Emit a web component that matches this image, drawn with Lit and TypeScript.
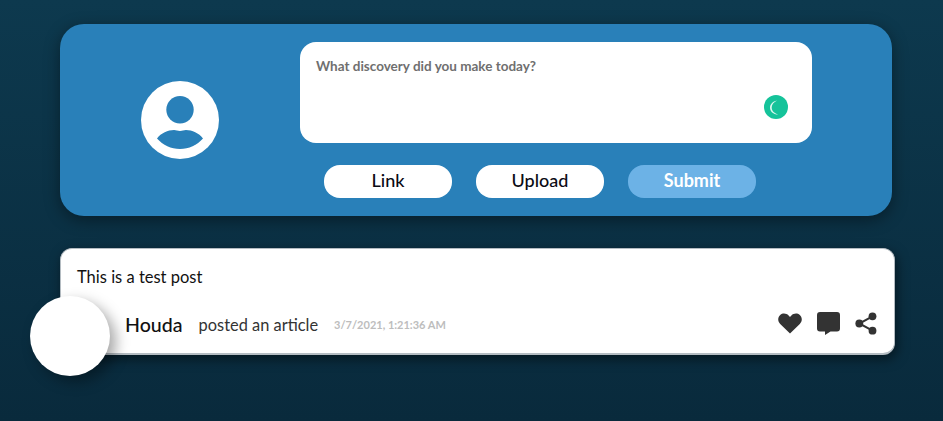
import { LitElement, html, css } from "lit";
import { customElement } from "lit/decorators.js";

@customElement("app-root")
export class AppRoot extends LitElement {
  static styles = css`
    :host {
      display: block;
      height: 421px;
      overflow: hidden;
      box-sizing: border-box;
      padding: 24px 49px 0 60px;
      background: linear-gradient(180deg, #0d394e 0%, #092a3c 100%);
      font-family: "Lato", "Open Sans", sans-serif;
    }
    .composer {
      width: 832px;
      height: 192px;
      box-sizing: border-box;
      padding: 18px 80px 18px 81px;
      border-radius: 24px;
      background: #2980b9;
      box-shadow: 0 4px 16px rgba(0, 0, 0, 0.4);
      display: flex;
      align-items: center;
    }
    .me {
      width: 78px;
      height: 78px;
      margin-right: 81px;
      flex: none;
      display: block;
    }
    .right {
      flex: 1;
      display: flex;
      flex-direction: column;
      gap: 22px;
    }
    .input {
      position: relative;
      height: 101px;
      box-sizing: border-box;
      padding: 16px;
      border-radius: 16px;
      background: #fff;
      color: #6f6f6f;
      font-size: 13.5px;
      font-weight: 700;
      line-height: 17px;
    }
    .grammarly {
      position: absolute;
      right: 24px;
      bottom: 24px;
      width: 24px;
      height: 24px;
    }
    .buttons {
      display: flex;
      justify-content: center;
      gap: 24px;
      padding-right: 32px;
    }
    .btn {
      width: 128px;
      height: 33px;
      box-sizing: border-box;
      padding-bottom: 3px;
      border-radius: 16px;
      background: #fff;
      color: #0b0b14;
      font-size: 18px;
      font-weight: 500;
      display: flex;
      align-items: center;
      justify-content: center;
    }
    .btn.primary {
      background: #6cb2e6;
      color: #fff;
      font-weight: 700;
    }
    .post {
      position: relative;
      width: 835px;
      height: 107px;
      box-sizing: border-box;
      margin-top: 32px;
      padding: 18px 16px 0 16px;
      border-radius: 12px;
      background: #fff;
      border-style: solid;
      border-color: #b4bcc2;
      border-width: 1px 1px 2px 1px;
      box-shadow: 2px 4px 12px rgba(0, 0, 0, 0.5);
      display: flex;
      flex-direction: column;
      gap: 25px;
    }
    .body {
      font-size: 16.5px;
      line-height: 20px;
      color: #111;
    }
    .meta {
      display: flex;
      align-items: center;
      padding-left: 48px;
      height: 24px;
      color: #333;
    }
    .avatar {
      position: absolute;
      left: -31px;
      top: 47px;
      width: 80px;
      height: 80px;
      border-radius: 50%;
      background: #fff;
      box-shadow: 6px 6px 14px rgba(0, 0, 0, 0.35);
    }
    .name {
      font-size: 19.6px;
      font-weight: 500;
      color: #111;
      margin-right: 16px;
    }
    .action {
      font-size: 16.4px;
      margin-right: 16px;
    }
    .time {
      font-size: 11px;
      font-weight: 700;
      color: #bdbdbd;
    }
    .icons {
      margin-left: auto;
      display: flex;
      align-items: center;
      gap: 15px;
      margin-right: 1px;
      padding-bottom: 2px;
    }
    .icons svg {
      display: block;
      fill: #333;
    }
  `;

  render() {
    return html`
      <div class="composer">
        <svg class="me" viewBox="0 0 78 78">
          <circle cx="39" cy="39" r="39" fill="#fff"></circle>
          <circle cx="39" cy="28.700" r="13.700" fill="#2980b9"></circle>
          <path
            d="M16 57.500C20 52 27 49 33 49c2.400 0 3.600 1 6 1s3.600-1 6-1c6 0 13 3 17 8.500C56 64 48 68 39 68S22 64 16 57.500Z"
            fill="#2980b9"
          ></path>
        </svg>
        <div class="right">
          <div class="input">
            What discovery did you make today?
            <svg class="grammarly" viewBox="0 0 24 24">
              <circle cx="12" cy="12" r="12" fill="#15c39a"></circle>
              <path
                d="M13 5.500C8.500 6.500 6 9.500 6 12.700c0 3.600 3.200 6.800 8.200 6.800C10 18.300 7.700 15.500 7.700 12.500 7.700 9.800 9.700 7.200 13 5.500Z"
                fill="#d9f6ee"
              ></path>
            </svg>
          </div>
          <div class="buttons">
            <div class="btn">Link</div>
            <div class="btn">Upload</div>
            <div class="btn primary">Submit</div>
          </div>
        </div>
      </div>
      <div class="post">
        <div class="avatar"></div>
        <div class="body">This is a test post</div>
        <div class="meta">
          <span class="name">Houda</span>
          <span class="action">posted an article</span>
          <span class="time">3/7/2021, 1:21:36 AM</span>
          <div class="icons">
            <svg width="24" height="21" viewBox="0 0 24 21">
              <path
                d="M12 20.600 2.200 11C-.6 8.200-.3 4 2.200 1.900 4.800-.2 8.500.3 10.600 2.500L12 3.900l1.400-1.400C15.500.3 19.200-.2 21.800 1.900 24.300 4 24.600 8.200 21.800 11Z"
              ></path>
            </svg>
            <svg width="23" height="23" viewBox="0 0 23 23">
              <path
                d="M3 0h17a3 3 0 0 1 3 3v13.500a3 3 0 0 1-3 3h-6.500L8 23v-3.500H3a3 3 0 0 1-3-3V3a3 3 0 0 1 3-3Z"
              ></path>
            </svg>
            <svg width="22" height="23" viewBox="0 0 22 23">
              <circle cx="17.500" cy="4.300" r="3.900"></circle>
              <circle cx="4.300" cy="11.500" r="3.900"></circle>
              <circle cx="17.500" cy="18.700" r="3.900"></circle>
              <path d="M17.500 4.300 4.300 11.500l13.200 7.200" fill="none" stroke="#333" stroke-width="2"></path>
            </svg>
          </div>
        </div>
      </div>
    `;
  }
}
